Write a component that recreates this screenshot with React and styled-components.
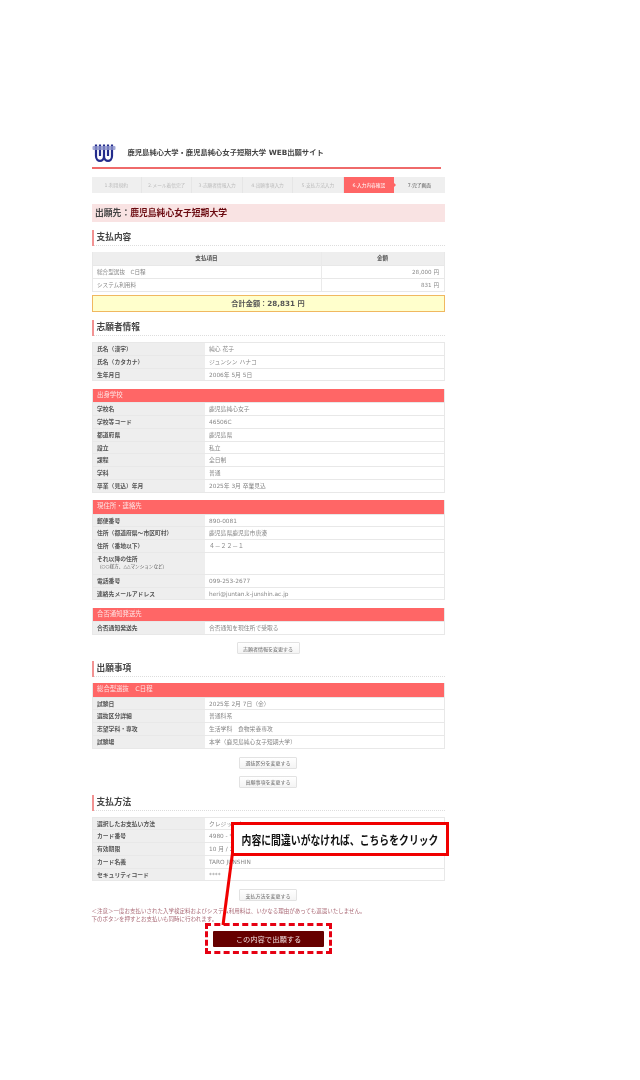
import styled, { createGlobalStyle } from "styled-components";

const GlobalStyle = createGlobalStyle`
  html, body {
    margin: 0;
    background: #fff;
  }
  body {
    font-family: "DejaVu Sans", "Noto Sans CJK JP", sans-serif;
    color: #555;
  }
`;

const steps = [
  "1.利用規約",
  "2.メール着信完了",
  "3.志願者情報入力",
  "4.出願事項入力",
  "5.支払方法入力",
  "6.入力内容確認",
  "7.完了画面",
];

const applicant = [
  ["氏名（漢字）", "純心 花子"],
  ["氏名（カタカナ）", "ジュンシン ハナコ"],
  ["生年月日", "2006年 5月 5日"],
];

const school = [
  ["学校名", "鹿児島純心女子"],
  ["学校等コード", "46506C"],
  ["都道府県", "鹿児島県"],
  ["設立", "私立"],
  ["課程", "全日制"],
  ["学科", "普通"],
  ["卒業（見込）年月", "2025年 3月 卒業見込"],
];

const address = [
  ["郵便番号", "890-0081"],
  ["住所（都道府県～市区町村）", "鹿児島県鹿児島市唐湊"],
  ["住所（番地以下）", "４－２２－１"],
  ["それ以降の住所", "", "（○○様方、△△マンションなど）"],
  ["電話番号", "099-253-2677"],
  ["連絡先メールアドレス", "heri@juntan.k-junshin.ac.jp"],
];

const exam = [
  ["試験日", "2025年 2月 7日（金）"],
  ["選抜区分詳細", "普通科系"],
  ["志望学科・専攻", "生活学科　食物栄養専攻"],
  ["試験場", "本学（鹿児島純心女子短期大学）"],
];

const payment = [
  ["選択したお支払い方法", "クレジットカード"],
  ["カード番号", "4980 - **** - **** - ****"],
  ["有効期限", "10 月 / 2028 年"],
  ["カード名義", "TARO JUNSHIN"],
  ["セキュリティコード", "****"],
];

function InfoTable({ title, rows, top }) {
  return (
    <InfoBox $top={top}>
      {title && <Band>{title}</Band>}
      {rows.map(([label, value, hint]) => (
        <InfoRow key={label} $tall={!!hint}>
          <InfoLabel>
            {label}
            {hint && <Hint>{hint}</Hint>}
          </InfoLabel>
          <InfoValue>{value}</InfoValue>
        </InfoRow>
      ))}
    </InfoBox>
  );
}

function Logo() {
  return (
    <svg width="24" height="19" viewBox="0 0 24 19" fill="none">
      <path
        d="M4 1.500V13c0 6.500 8 6.500 8 0 0 6.500 8 6.500 8 0V1.500M8 1.500V13M16 1.500V13M12 1.500V13"
        stroke="#232c8c"
        strokeWidth="2.200"
      />
      <rect x="0.500" y="3" width="23" height="4" rx="1" fill="#8b92cc" opacity="0.8" />
    </svg>
  );
}

export default function App() {
  return (
    <Page>
      <GlobalStyle />
      <Content>
        <Header>
          <Logo />
          <SiteTitle>鹿児島純心大学・鹿児島純心女子短期大学 WEB出願サイト</SiteTitle>
        </Header>
        <Steps>
          {steps.map((step, i) => (
            <Step key={step} $active={i === 5} $done={i === 6}>
              {step}
            </Step>
          ))}
        </Steps>
        <Destination>
          出願先：<em>鹿児島純心女子短期大学</em>
        </Destination>

        <Heading $top={8}>支払内容</Heading>
        <PayTable>
          <PayHead>
            <span>支払項目</span>
            <span>金額</span>
          </PayHead>
          <PayRow>
            <span>総合型選抜　C日程</span>
            <span>28,000 円</span>
          </PayRow>
          <PayRow>
            <span>システム利用料</span>
            <span>831 円</span>
          </PayRow>
        </PayTable>
        <Total>合計金額：28,831 円</Total>

        <Heading $top={8}>志願者情報</Heading>
        <InfoTable rows={applicant} top={6} />
        <InfoTable title="出身学校" rows={school} top={7.5} />
        <InfoTable title="現住所・連絡先" rows={address} top={7.5} />
        <InfoTable
          title="合否通知発送先"
          rows={[["合否通知発送先", "合否通知を現住所で受取る"]]}
          top={7.5}
        />
        <Actions $top={7}>
          <ChangeButton $wide>志願者情報を変更する</ChangeButton>
        </Actions>

        <Heading $top={7}>出願事項</Heading>
        <InfoTable title="総合型選抜　C日程" rows={exam} top={6} />
        <Actions $top={8}>
          <ChangeButton>選抜区分を変更する</ChangeButton>
          <ChangeButton>出願事項を変更する</ChangeButton>
        </Actions>

        <Heading $top={7}>支払方法</Heading>
        <InfoTable rows={payment} top={6} />
        <Actions $top={8}>
          <ChangeButton>支払方法を変更する</ChangeButton>
        </Actions>

        <Notice>
          ＜注意＞一度お支払いされた入学検定料およびシステム利用料は、いかなる理由があっても返還いたしません。
          <br />
          下のボタンを押すとお支払いも同時に行われます。
        </Notice>
        <SubmitArea>
          <SubmitFrame>
            <SubmitButton>この内容で出願する</SubmitButton>
          </SubmitFrame>
        </SubmitArea>
      </Content>

      <Pointer width="20" height="80" viewBox="0 0 20 80">
        <line x1="14.5" y1="0" x2="5" y2="72" stroke="#f00000" strokeWidth="3" />
      </Pointer>
      <Callout>
        <CalloutText>内容に間違いがなければ、こちらをクリック</CalloutText>
      </Callout>
    </Page>
  );
}

const Page = styled.div`
  position: relative;
  width: 640px;
  height: 1080px;
  overflow: hidden;
`;

const Content = styled.main`
  width: 353px;
  margin-left: 91.5px;
  padding-top: 143px;
  filter: blur(0.4px);
`;

const Header = styled.header`
  display: flex;
  align-items: flex-start;
  gap: 12px;
  width: 349px;
  height: 24px;
  border-bottom: 2px solid #ef6a6a;
`;

const SiteTitle = styled.h1`
  margin: 4px 0 0;
  font-size: 7.3px;
  line-height: 12px;
  font-weight: 700;
  color: #444;
  white-space: nowrap;
`;

const Steps = styled.ol`
  display: grid;
  grid-template-columns: repeat(7, 1fr);
  height: 16px;
  margin: 8px 0 0;
  padding: 0;
  list-style: none;
  background: #efefef;
`;

const Step = styled.li`
  position: relative;
  display: flex;
  align-items: center;
  justify-content: center;
  font-size: 4.7px;
  white-space: nowrap;
  color: ${(p) => (p.$active ? "#fff" : p.$done ? "#555" : "#bbb")};
  background: ${(p) => (p.$active ? "#ff6666" : "transparent")};
  border-right: ${(p) => (p.$active || p.$done ? "0" : "1px solid #e6e6e6")};

  ${(p) =>
    p.$active &&
    `&::after {
      content: "";
      position: absolute;
      left: 100%;
      top: 5.5px;
      border-left: 2.5px solid #ff6666;
      border-top: 2.5px solid transparent;
      border-bottom: 2.5px solid transparent;
    }`}
`;

const Destination = styled.div`
  height: 18px;
  margin-top: 11px;
  padding-left: 3.5px;
  background: #f9e3e3;
  font-size: 8.8px;
  line-height: 18px;
  font-weight: 700;
  color: #444;

  em {
    font-style: normal;
    color: #6b0a10;
  }
`;

const Heading = styled.h2`
  position: relative;
  height: 16px;
  margin: ${(p) => p.$top}px 0 0;
  padding-left: 3px;
  border-left: 2px solid #f29393;
  font-size: 8.7px;
  line-height: 15px;
  font-weight: 700;
  color: #444;

  &::after {
    content: "";
    position: absolute;
    left: 0;
    right: 0;
    bottom: 0;
    border-bottom: 1px dotted #ddd;
  }
`;

const PayTable = styled.div`
  margin-top: 6px;
  border: 1px solid #e8e8e8;
  border-width: 0 1px;
  font-size: 5.6px;
`;

const PayRow = styled.div`
  display: grid;
  grid-template-columns: 228px 1fr;
  height: 13px;
  line-height: 12.5px;
  border-bottom: 1px solid #e8e8e8;
  box-sizing: border-box;
  color: #888;

  span {
    padding: 0 4.5px;
  }
  span + span {
    text-align: right;
    border-left: 1px solid #eaeaea;
  }
`;

const PayHead = styled(PayRow)`
  height: 14px;
  line-height: 13.5px;
  background: #eee;
  font-weight: 700;
  color: #555;

  span,
  span + span {
    text-align: center;
  }
`;

const Total = styled.div`
  height: 17px;
  margin-top: 3px;
  box-sizing: border-box;
  border: 1px solid #f0b860;
  background: #ffffcc;
  font-size: 7.2px;
  line-height: 15px;
  font-weight: 700;
  color: #555;
  text-align: center;
`;

const InfoBox = styled.section`
  margin-top: ${(p) => p.$top}px;
  border: 1px solid #e8e8e8;
  border-top-width: 0;
  font-size: 5.8px;
`;

const Band = styled.div`
  height: 13.5px;
  padding-left: 4.5px;
  background: #ff6666;
  color: #fde4e4;
  font-size: 6.4px;
  line-height: 13px;
`;

const InfoRow = styled.div`
  display: grid;
  grid-template-columns: 112.5px 1fr;
  height: ${(p) => (p.$tall ? "22px" : "12.75px")};
  box-sizing: border-box;
  border-top: 1px solid #e8e8e8;
`;

const InfoLabel = styled.div`
  padding: 2px 0 0 4.5px;
  background: #eee;
  font-weight: 700;
  line-height: 8px;
  color: #555;
  white-space: nowrap;
`;

const Hint = styled.small`
  display: block;
  margin-top: 1px;
  font-size: 4.6px;
  line-height: 6px;
  font-weight: 400;
`;

const InfoValue = styled.div`
  padding: 2px 0 0 4px;
  line-height: 8px;
  color: #888;
  white-space: nowrap;
`;

const Actions = styled.div`
  display: flex;
  flex-direction: column;
  align-items: center;
  gap: 7px;
  margin-top: ${(p) => p.$top}px;
`;

const ChangeButton = styled.button`
  width: ${(p) => (p.$wide ? "63px" : "58px")};
  height: 12px;
  padding: 0;
  border: 1px solid #e2e2e2;
  border-radius: 1px;
  background: linear-gradient(#fff, #f4f4f4);
  font-family: inherit;
  font-size: 5px;
  color: #666;
`;

const Notice = styled.p`
  margin: 6px 0 0;
  font-size: 5.5px;
  line-height: 8px;
  color: #aa6a76;
  white-space: nowrap;
`;

const SubmitArea = styled.div`
  display: flex;
  justify-content: center;
`;

const SubmitFrame = styled.div`
  margin-left: 1px;
  padding: 5px 5px 4px;
  border: 3px dashed #e60012;
`;

const SubmitButton = styled.button`
  display: block;
  width: 111px;
  height: 16px;
  padding: 0;
  border: 0;
  border-radius: 1px;
  background: #660000;
  font-family: inherit;
  font-size: 7.3px;
  color: #f0dcdc;
`;

const Callout = styled.aside`
  position: absolute;
  left: 231px;
  top: 822px;
  width: 218px;
  height: 34px;
  box-sizing: border-box;
  border: 3px solid #f00000;
  background: #fff;
  display: flex;
  align-items: center;
  justify-content: center;
`;

const CalloutText = styled.strong`
  display: inline-block;
  font-size: 12px;
  font-weight: 700;
  color: #111;
  white-space: nowrap;
  transform: scaleX(0.82);
`;

const Pointer = styled.svg`
  position: absolute;
  left: 218px;
  top: 853px;
`;
